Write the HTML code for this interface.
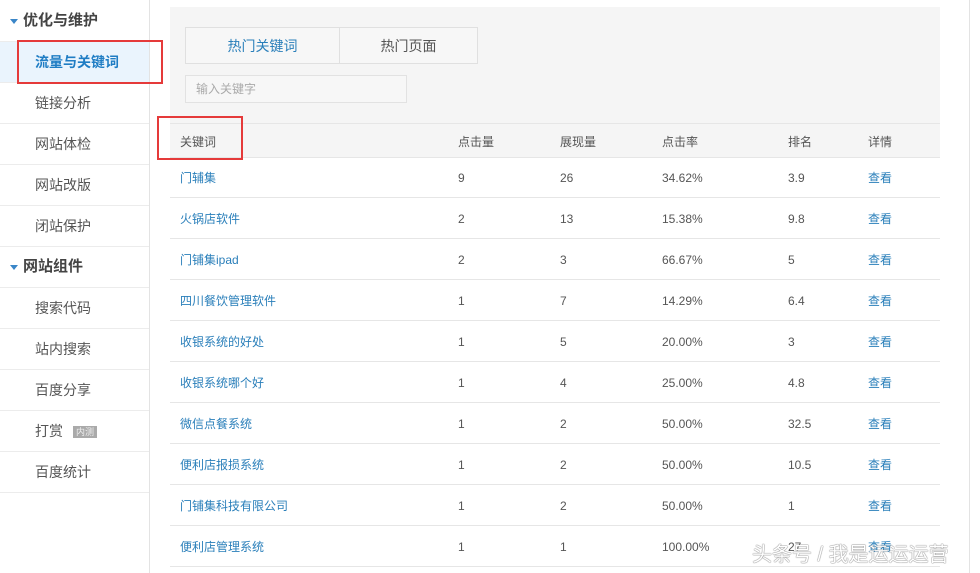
<!DOCTYPE html><html><head><meta charset="utf-8"><style>
body{margin:0;width:980px;height:573px;overflow:hidden;background:#fff;font-family:"Liberation Sans","Noto Sans CJK SC",sans-serif;font-size:13px;color:#555;position:relative}
.sb{position:absolute;left:0;top:0;width:149px;border-right:1px solid #e3e3e3;height:573px}
.it{position:absolute;left:0;width:149px;height:40px;border-bottom:1px solid #ececec;line-height:40px;font-size:14px;color:#555}
.it span{position:absolute;left:35px}
.hd{font-weight:bold;font-size:15px;color:#444}
.hd span{left:23px}
.hd i{position:absolute;left:10px;top:18px;border-left:4px solid transparent;border-right:4px solid transparent;border-top:5px solid #3a86c8}
.act{background:#eaf4fd;color:#1f7dc4;font-weight:bold}
.red{position:absolute;border:2px solid #e53a3a;box-sizing:border-box}
.panel{position:absolute;left:170px;top:7px;width:770px;height:150px;background:#f5f5f5}
.tab{position:absolute;top:27px;height:37px;line-height:37px;text-align:center;border:1px solid #e0e0e0;background:#f7f7f7;font-size:14px;box-sizing:border-box}
.inp{position:absolute;left:185px;top:75px;width:222px;height:28px;border:1px solid #e2e2e2;box-sizing:border-box;background:#f7f7f7;color:#aaa;font-size:12px;line-height:26px;padding-left:10px}
.row{position:absolute;left:170px;width:770px;height:40px;border-bottom:1px solid #e6e6e6;line-height:43px}
.row b{position:absolute;font-weight:normal;font-size:12px}
.row b.k{left:10px;color:#2a7fba}
.row b.v{left:698px;color:#2a7fba}
.vl{position:absolute;left:969px;top:0;width:1px;height:573px;background:#e3e3e3}
.tag{display:inline-block;background:#aaa;color:#eee;font-size:9px;line-height:12px;padding:0 3px;margin-left:10px;vertical-align:1px}
</style></head><body>
<div class="sb">
<div class="it hd" style="top:1px"><i></i><span>优化与维护</span></div>
<div class="it act" style="top:42px"><span>流量与关键词</span></div>
<div class="it" style="top:83px"><span>链接分析</span></div>
<div class="it" style="top:124px"><span>网站体检</span></div>
<div class="it" style="top:165px"><span>网站改版</span></div>
<div class="it" style="top:206px"><span>闭站保护</span></div>
<div class="it hd" style="top:247px"><i></i><span>网站组件</span></div>
<div class="it" style="top:288px"><span>搜索代码</span></div>
<div class="it" style="top:329px"><span>站内搜索</span></div>
<div class="it" style="top:370px"><span>百度分享</span></div>
<div class="it" style="top:411px"><span>打赏<em class="tag" style="font-style:normal">内测</em></span></div>
<div class="it" style="top:452px"><span>百度统计</span></div>
</div>
<div class="vl"></div>
<div class="panel"></div>
<div class="tab" style="left:185px;width:155px;color:#2a7fba">热门关键词</div>
<div class="tab" style="left:339px;width:139px;color:#555">热门页面</div>
<div class="inp">输入关键字</div>
<div class="row" style="top:123px;height:33px;line-height:36px;border-top:1px solid #e6e6e6;background:#f5f5f5"><b style="left:10px">关键词</b><b style="left:288px">点击量</b><b style="left:390px">展现量</b><b style="left:492px">点击率</b><b style="left:618px">排名</b><b style="left:698px">详情</b></div>
<div class="row" style="top:157px"><b class="k">门辅集</b><b style="left:288px">9</b><b style="left:390px">26</b><b style="left:492px">34.62%</b><b style="left:618px">3.9</b><b class="v">查看</b></div>
<div class="row" style="top:198px"><b class="k">火锅店软件</b><b style="left:288px">2</b><b style="left:390px">13</b><b style="left:492px">15.38%</b><b style="left:618px">9.8</b><b class="v">查看</b></div>
<div class="row" style="top:239px"><b class="k">门铺集ipad</b><b style="left:288px">2</b><b style="left:390px">3</b><b style="left:492px">66.67%</b><b style="left:618px">5</b><b class="v">查看</b></div>
<div class="row" style="top:280px"><b class="k">四川餐饮管理软件</b><b style="left:288px">1</b><b style="left:390px">7</b><b style="left:492px">14.29%</b><b style="left:618px">6.4</b><b class="v">查看</b></div>
<div class="row" style="top:321px"><b class="k">收银系统的好处</b><b style="left:288px">1</b><b style="left:390px">5</b><b style="left:492px">20.00%</b><b style="left:618px">3</b><b class="v">查看</b></div>
<div class="row" style="top:362px"><b class="k">收银系统哪个好</b><b style="left:288px">1</b><b style="left:390px">4</b><b style="left:492px">25.00%</b><b style="left:618px">4.8</b><b class="v">查看</b></div>
<div class="row" style="top:403px"><b class="k">微信点餐系统</b><b style="left:288px">1</b><b style="left:390px">2</b><b style="left:492px">50.00%</b><b style="left:618px">32.5</b><b class="v">查看</b></div>
<div class="row" style="top:444px"><b class="k">便利店报损系统</b><b style="left:288px">1</b><b style="left:390px">2</b><b style="left:492px">50.00%</b><b style="left:618px">10.5</b><b class="v">查看</b></div>
<div class="row" style="top:485px"><b class="k">门铺集科技有限公司</b><b style="left:288px">1</b><b style="left:390px">2</b><b style="left:492px">50.00%</b><b style="left:618px">1</b><b class="v">查看</b></div>
<div class="row" style="top:526px"><b class="k">便利店管理系统</b><b style="left:288px">1</b><b style="left:390px">1</b><b style="left:492px">100.00%</b><b style="left:618px">27</b><b class="v">查看</b></div>
<div class="red" style="left:17px;top:40px;width:146px;height:44px"></div>
<div class="red" style="left:157px;top:116px;width:86px;height:44px"></div>
<div style="position:absolute;left:752px;top:538px;font-size:20px;color:#fff;text-shadow:0 0 1px #666,0 0 1px #666;letter-spacing:0px">头条号 / 我是运运运营</div>
</body></html>
